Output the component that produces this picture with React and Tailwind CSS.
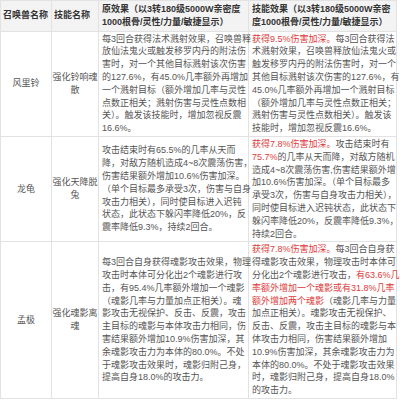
const rows = [
  {
    name: '风里铃',
    skill: ['强化铃响魂', '散'],
    orig: [
      '每3回合获得法术溅射效果，召唤兽释',
      '放仙法鬼火或触发移罗内丹的附法伤',
      '害时，对一个其他目标溅射该次伤害',
      '的127.6%，有45.0%几率额外再增加',
      '一个溅射目标（额外增加几率与灵性',
      '点数正相关；溅射伤害与灵性点数相',
      '关）。触发该技能时，增加忽视反震',
      '16.6%。',
    ],
    now: [
      '*获得9.5%伤害加深。*每3回合获得法',
      '术溅射效果，召唤兽释放仙法鬼火或',
      '触发移罗内丹的附法伤害时，对一个',
      '其他目标溅射该次伤害的127.6%，有',
      '45.0%几率额外再增加一个溅射目标',
      '（额外增加几率与灵性点数正相关；',
      '溅射伤害与灵性点数相关）。触发该',
      '技能时，增加忽视反震16.6%。',
    ],
  },
  {
    name: '龙龟',
    skill: ['强化天降脱', '兔'],
    orig: [
      '攻击结束时有65.5%的几率从天而',
      '降，对敌方随机造成4~8次震荡伤害，',
      '伤害结果额外增加10.6%伤害加深。',
      '（单个目标最多承受3次，伤害与自身',
      '攻击力相关），同时使目标进入迟钝',
      '状态，此状态下躲闪率降低20%，反',
      '震率降低9.3%，持续2回合。',
    ],
    now: [
      '*获得7.8%伤害加深。*攻击结束时有',
      '*75.7%*的几率从天而降，对敌方随机',
      '造成4~8次震荡伤害,伤害结果额外增',
      '加10.6%伤害加深。（单个目标最多',
      '承受3次，伤害与自身攻击力相关），',
      '同时使目标进入迟钝状态，此状态下',
      '躲闪率降低20%，反震率降低9.3%，',
      '持续2回合。',
    ],
  },
  {
    name: '孟极',
    skill: ['强化魂影离', '魂'],
    orig: [
      '每3回合自身获得魂影攻击效果，物理',
      '攻击时本体可分化出2个魂影进行攻',
      '击，有95.4%几率额外增加一个魂影',
      '（魂影几率与力量加点正相关）。魂',
      '影攻击无视保护、反击、反震，攻击',
      '主目标的魂影与本体攻击力相同，伤',
      '害结果额外增加10.9%伤害加深，其',
      '余魂影攻击力为本体的80.0%。不处',
      '于魂影攻击效果时，魂影归附己身，',
      '提高自身18.0%的攻击力。',
    ],
    now: [
      '*获得7.8%伤害加深。*每3回合自身获',
      '得魂影攻击效果，物理攻击时本体可',
      '分化出2个魂影进行攻击，*有63.6%几',
      '*率额外增加一个魂影或有31.8%几率',
      '*额外增加两个魂影*（魂影几率与力量',
      '加点正相关）。魂影攻击无视保护、',
      '反击、反震，攻击主目标的魂影与本',
      '体攻击力相同，伤害结果额外增加',
      '10.9%伤害加深，其余魂影攻击力为',
      '本体的80.0%。不处于魂影攻击效果',
      '时，魂影归附己身，提高自身18.0%',
      '的攻击力。',
    ],
  },
]

function Lines({ lines }) {
  return lines.map((line, i) => (
    <div key={i} className="whitespace-nowrap">
      {line.split('*').map((part, j) =>
        j % 2 ? (
          <span key={j} className="text-[#dd3b3b]">
            {part}
          </span>
        ) : (
          <span key={j}>{part}</span>
        )
      )}
    </div>
  ))
}

export default function App() {
  return (
    <div
      className="bg-white w-[400px] h-[402px] overflow-hidden text-[9px] leading-[12.8px] text-[#555]"
      style={{ fontFamily: '"Liberation Sans", "Noto Sans CJK SC", sans-serif' }}
    >
      <table className="border-collapse table-fixed w-[396px]">
        <colgroup>
          <col className="w-[51px]" />
          <col className="w-[47px]" />
          <col className="w-[150px]" />
          <col className="w-[148px]" />
        </colgroup>
        <thead>
          <tr className="bg-[#f3f3f3] text-[#333] font-bold">
            <th className="border border-[#e2e2e2] px-[2px] py-[2px] text-left font-bold whitespace-nowrap">
              召唤兽名称
            </th>
            <th className="border border-[#e2e2e2] px-[2px] py-[2px] text-left font-bold whitespace-nowrap">
              技能名称
            </th>
            <th className="border border-[#e2e2e2] px-[3px] py-[2px] text-left font-bold">
              <Lines lines={['原效果（以3转180级5000W亲密度', '1000根骨/灵性/力量/敏捷显示）']} />
            </th>
            <th className="border border-[#e2e2e2] px-[3px] py-[2px] text-left font-bold">
              <Lines lines={['技能效果（以3转180级5000W亲密', '度1000根骨/灵性/力量/敏捷显示）']} />
            </th>
          </tr>
        </thead>
        <tbody>
          {rows.map((r) => (
            <tr key={r.name}>
              <td className="border border-[#e2e2e2] text-center align-middle">{r.name}</td>
              <td className="border border-[#e2e2e2] text-center align-middle">
                <Lines lines={r.skill} />
              </td>
              <td className="border border-[#e2e2e2] px-[3px] py-[1px] align-middle">
                <Lines lines={r.orig} />
              </td>
              <td className="border border-[#e2e2e2] px-[3px] py-[1px] align-middle">
                <Lines lines={r.now} />
              </td>
            </tr>
          ))}
        </tbody>
      </table>
    </div>
  )
}
